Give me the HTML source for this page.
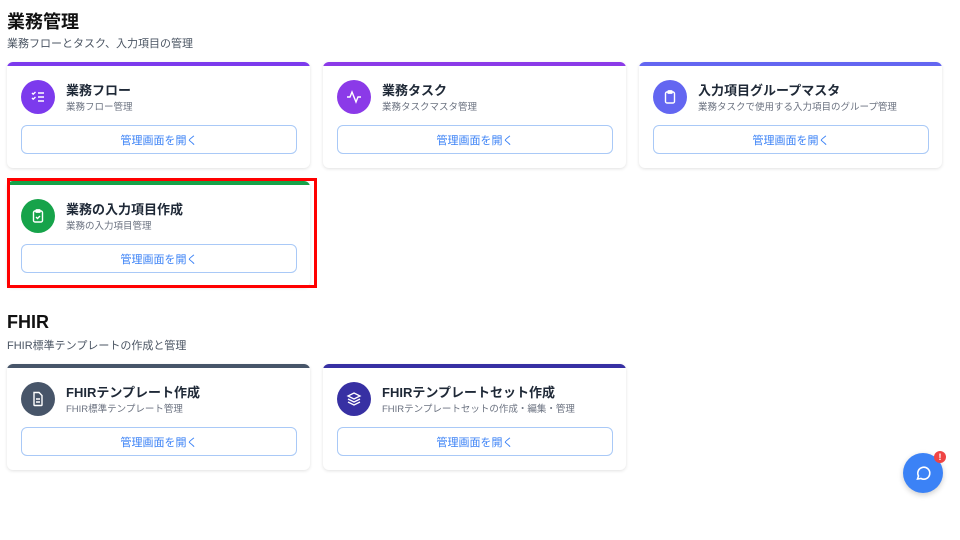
<!DOCTYPE html>
<html><head><meta charset="utf-8"><style>
*{box-sizing:border-box;margin:0;padding:0}
body{width:960px;height:540px;background:#fff;font-family:"Liberation Sans","Noto Sans CJK JP",sans-serif;position:relative;overflow:hidden;color:#1f2937}
.h{position:absolute;left:7px;font-size:18px;font-weight:700;color:#111}
.s{position:absolute;left:7px;font-size:11px;color:#4b5563}
.card{position:absolute;width:303px;height:106px;background:#fff;border-radius:6px;box-shadow:0 1px 3px rgba(0,0,0,.12);overflow:hidden}
.card .bar{position:absolute;left:0;top:0;right:0;height:4px}
.ic{position:absolute;left:14px;top:18px;width:34px;height:34px;border-radius:50%;display:flex;align-items:center;justify-content:center}
.t{position:absolute;left:59px;top:18px;font-size:13px;font-weight:700;color:#1f2937;white-space:nowrap}
.d{position:absolute;left:59px;top:37px;font-size:9.5px;color:#6b7280;white-space:nowrap}
.b{position:absolute;left:14px;top:63px;width:276px;height:29px;border:1px solid #a9c9f7;border-radius:6px;color:#3b82f6;font-size:11px;display:flex;align-items:center;justify-content:center}
</style></head><body>
<div class="h" style="top:8px">業務管理</div>
<div class="s" style="top:35px">業務フローとタスク、入力項目の管理</div>

<div class="card" style="left:7px;top:62px"><div class="bar" style="background:#7c3aed"></div>
<div class="ic" style="background:#7c3aed;top:18px"><svg width="16" height="16" viewBox="0 0 16 16" fill="none" stroke="#fff" stroke-width="1.4"><path d="M2 4l1.2 1.2L5.5 3M2 9l1.2 1.2L5.5 8M8 4h6M8 8h6M8 12h6"/></svg></div>
<div class="t">業務フロー</div><div class="d">業務フロー管理</div><div class="b">管理画面を開く</div></div>

<div class="card" style="left:323px;top:62px"><div class="bar" style="background:#8b3ae8"></div>
<div class="ic" style="background:#8b3ae8"><svg width="16" height="16" viewBox="0 0 16 16" fill="none" stroke="#fff" stroke-width="1.4"><path d="M1 8h3l2-5 4 10 2-5h3"/></svg></div>
<div class="t">業務タスク</div><div class="d">業務タスクマスタ管理</div><div class="b">管理画面を開く</div></div>

<div class="card" style="left:639px;top:62px"><div class="bar" style="background:#6366f1"></div>
<div class="ic" style="background:#6366f1"><svg width="16" height="16" viewBox="0 0 16 16" fill="none" stroke="#fff" stroke-width="1.4"><rect x="3.5" y="3" width="9" height="11" rx="1.5"/><rect x="6" y="1.8" width="4" height="2.4" rx=".6"/></svg></div>
<div class="t">入力項目グループマスタ</div><div class="d">業務タスクで使用する入力項目のグループ管理</div><div class="b">管理画面を開く</div></div>

<div class="card" style="left:7px;top:181px"><div class="bar" style="background:#16a34a"></div>
<div class="ic" style="background:#16a34a"><svg width="16" height="16" viewBox="0 0 16 16" fill="none" stroke="#fff" stroke-width="1.4"><rect x="3.5" y="3" width="9" height="11" rx="1.5"/><rect x="6" y="1.8" width="4" height="2.4" rx=".6"/><path d="M6 9l1.5 1.5L10 8"/></svg></div>
<div class="t">業務の入力項目作成</div><div class="d">業務の入力項目管理</div><div class="b">管理画面を開く</div></div>
<div style="position:absolute;left:7px;top:178px;width:310px;height:110px;border:3px solid #f00"></div>

<div class="h" style="top:312px">FHIR</div>
<div class="s" style="top:337px">FHIR標準テンプレートの作成と管理</div>

<div class="card" style="left:7px;top:364px"><div class="bar" style="background:#475569"></div>
<div class="ic" style="background:#475569"><svg width="16" height="16" viewBox="0 0 16 16" fill="none" stroke="#fff" stroke-width="1.4"><path d="M4 1.5h5l3 3V14a.5.5 0 0 1-.5.5h-7A.5.5 0 0 1 4 14z"/><path d="M6 8h4M6 11h4"/></svg></div>
<div class="t">FHIRテンプレート作成</div><div class="d">FHIR標準テンプレート管理</div><div class="b">管理画面を開く</div></div>

<div class="card" style="left:323px;top:364px"><div class="bar" style="background:#3730a3"></div>
<div class="ic" style="background:#3730a3"><svg width="16" height="16" viewBox="0 0 16 16" fill="none" stroke="#fff" stroke-width="1.3"><path d="M8 2l6 3-6 3-6-3z"/><path d="M2 8l6 3 6-3M2 11l6 3 6-3"/></svg></div>
<div class="t">FHIRテンプレートセット作成</div><div class="d">FHIRテンプレートセットの作成・編集・管理</div><div class="b">管理画面を開く</div></div>

<div style="position:absolute;left:903px;top:453px;width:40px;height:40px;border-radius:50%;background:#3b82f6;box-shadow:0 2px 6px rgba(0,0,0,.2);display:flex;align-items:center;justify-content:center"><svg width="18" height="18" viewBox="0 0 18 18" fill="none" stroke="#fff" stroke-width="1.6"><path d="M3.5 15l1-3A6 6 0 1 1 7 14.5z"/></svg></div>
<div style="position:absolute;left:934px;top:451px;width:12px;height:12px;border-radius:50%;background:#ef4444;color:#fff;font-size:9px;font-weight:700;text-align:center;line-height:12px">!</div>
</body></html>
